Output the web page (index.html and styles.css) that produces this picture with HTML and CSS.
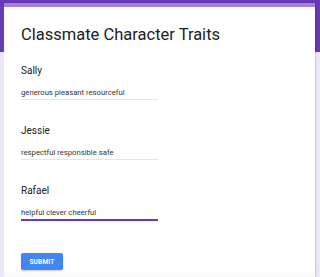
FILE: index.html
```html
<!DOCTYPE html>
<html>
<head>
<meta charset="utf-8">
<link rel="stylesheet" href="styles.css">
</head>
<body>
<div class="card">
  <h1 class="title">Classmate Character Traits</h1>
  <div class="question">
    <div class="label">Sally</div>
    <div class="input">generous pleasant resourceful</div>
  </div>
  <div class="question">
    <div class="label">Jessie</div>
    <div class="input">respectful responsible safe</div>
  </div>
  <div class="question">
    <div class="label">Rafael</div>
    <div class="input focused">helpful clever cheerful</div>
  </div>
  <button class="submit">SUBMIT</button>
</div>
</body>
</html>
```
FILE: styles.css
```css
html, body {
  margin: 0;
  padding: 0;
}
body {
  width: 320px;
  height: 277px;
  overflow: hidden;
  background: linear-gradient(#673ab7 0, #673ab7 52px, #ede7f6 52px);
  font-family: Roboto, "Liberation Sans", sans-serif;
}
.card {
  box-sizing: border-box;
  margin: 3px 5px 0 4px;
  height: 274px;
  background: linear-gradient(#fff 0, #fff 262px, #f4f4f4 274px);
  border-top: 4px solid #a27fe3;
  padding: 16px 17px 0;
  box-shadow: 1px 0 2px rgba(0,0,0,0.15);
}
.title {
  margin: 0;
  font-size: 16.5px;
  line-height: 24px;
  font-weight: 400;
  color: #202124;
}
.question {
  display: flex;
  flex-direction: column;
  margin-top: 16px;
}
.question + .question {
  margin-top: 23px;
}
.label {
  font-size: 10px;
  line-height: 16px;
  color: #202124;
}
.input {
  margin-top: 8px;
  width: 137px;
  font-size: 7.7px;
  line-height: 12px;
  color: #333;
  border-bottom: 1px solid #e6e6e6;
}
.input.focused {
  border-bottom: 2px solid #673ab7;
}
.submit {
  display: block;
  margin-top: 32px;
  width: 42px;
  height: 17px;
  padding: 0;
  border: none;
  border-radius: 2px;
  background: #4285f4;
  color: #fff;
  font-family: Roboto, "Liberation Sans", sans-serif;
  font-weight: 700;
  font-size: 6.5px;
  letter-spacing: 0.2px;
  box-shadow: 0 1px 2px rgba(0,0,0,0.2);
}
```
